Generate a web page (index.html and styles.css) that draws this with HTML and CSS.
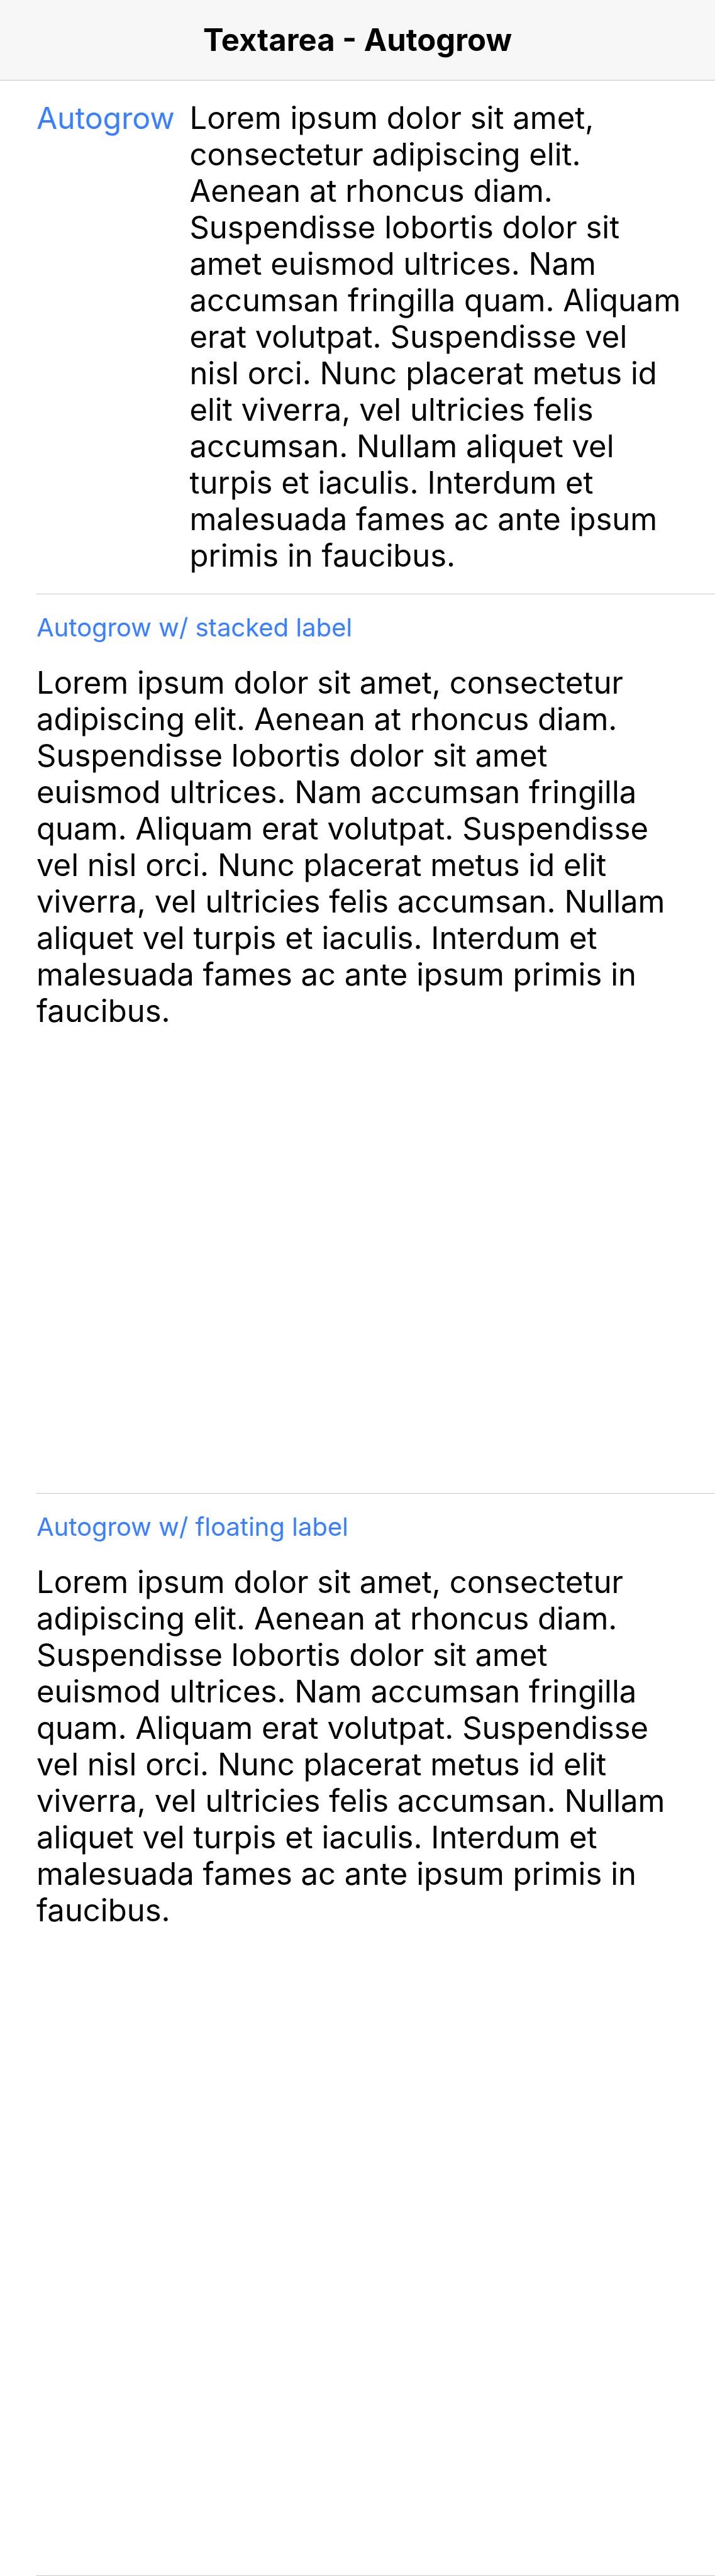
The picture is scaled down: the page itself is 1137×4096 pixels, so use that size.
FILE: index.html
```html
<!DOCTYPE html>
<html lang="en">
<head>
<meta charset="utf-8">
<meta name="viewport" content="width=device-width, initial-scale=1">
<title>Textarea - Autogrow</title>
<link rel="stylesheet" href="styles.css">
</head>
<body>
<header class="toolbar">
  <h1 class="toolbar-title">Textarea - Autogrow</h1>
</header>
<main class="list">
  <div class="item item-inline">
    <label class="label" for="inline">Autogrow</label>
    <textarea class="textarea" id="inline" rows="13" spellcheck="false">Lorem ipsum dolor sit amet, consectetur adipiscing elit. Aenean at rhoncus diam. Suspendisse lobortis dolor sit amet euismod ultrices. Nam accumsan fringilla quam. Aliquam erat volutpat. Suspendisse vel nisl orci. Nunc placerat metus id elit viverra, vel ultricies felis accumsan. Nullam aliquet vel turpis et iaculis. Interdum et malesuada fames ac ante ipsum primis in faucibus.</textarea>
  </div>
  <div class="item item-stacked">
    <label class="label label-small" for="stacked">Autogrow w/ stacked label</label>
    <textarea class="textarea textarea-stacked" id="stacked" spellcheck="false">Lorem ipsum dolor sit amet, consectetur adipiscing elit. Aenean at rhoncus diam. Suspendisse lobortis dolor sit amet euismod ultrices. Nam accumsan fringilla quam. Aliquam erat volutpat. Suspendisse vel nisl orci. Nunc placerat metus id elit viverra, vel ultricies felis accumsan. Nullam aliquet vel turpis et iaculis. Interdum et malesuada fames ac ante ipsum primis in faucibus.</textarea>
  </div>
  <div class="item item-stacked">
    <label class="label label-small" for="floating">Autogrow w/ floating label</label>
    <textarea class="textarea textarea-floating" id="floating" spellcheck="false">Lorem ipsum dolor sit amet, consectetur adipiscing elit. Aenean at rhoncus diam. Suspendisse lobortis dolor sit amet euismod ultrices. Nam accumsan fringilla quam. Aliquam erat volutpat. Suspendisse vel nisl orci. Nunc placerat metus id elit viverra, vel ultricies felis accumsan. Nullam aliquet vel turpis et iaculis. Interdum et malesuada fames ac ante ipsum primis in faucibus.</textarea>
  </div>
</main>
</body>
</html>
```
FILE: styles.css
```css
* {
  box-sizing: border-box;
}

body {
  margin: 0;
  background: #fff;
  color: #000;
  font-family: Inter, "Liberation Sans", sans-serif;
  font-size: 49px;
  line-height: 58px;
}

.toolbar {
  padding: 35px 58px 34px;
  background: #f7f7f7;
  border-bottom: 1px solid #c4c4c4;
  text-align: center;
}

.toolbar-title {
  margin: 0;
  font-size: 49px;
  font-weight: 700;
}

.list {
  padding-left: 58px;
}

.item {
  display: flex;
  border-bottom: 1px solid #c8c7cc;
}

.item-inline {
  gap: 24px;
  padding: 31px 53px 31px 0;
}

.item-stacked {
  flex-direction: column;
  gap: 35px;
  padding: 29px 72px 0 0;
}

.label {
  flex: none;
  color: #3880ff;
  font-size: 48px;
}

.label-small {
  font-size: 40px;
  line-height: 48px;
}

.textarea {
  display: block;
  flex: 1 1 auto;
  width: 100%;
  min-width: 0;
  margin: 0;
  padding: 0;
  border: 0;
  outline: 0;
  background: transparent;
  color: inherit;
  font: inherit;
  resize: none;
  overflow: hidden;
}

.textarea-stacked {
  min-height: 1317px;
}

.textarea-floating {
  min-height: 1608px;
}
```
